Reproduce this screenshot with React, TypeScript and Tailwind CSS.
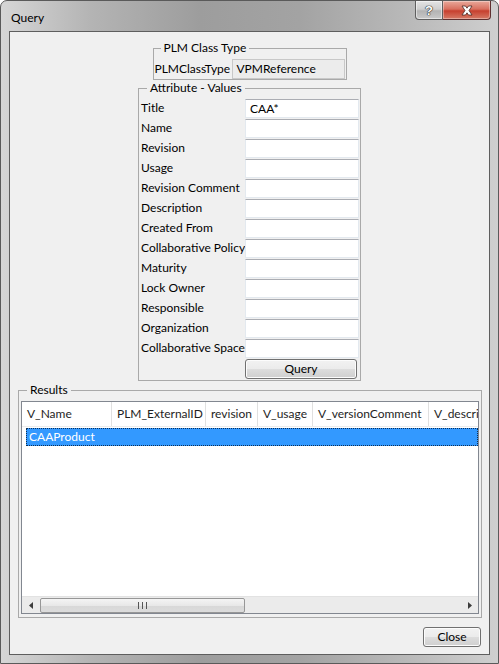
const labels = [
  "Title",
  "Name",
  "Revision",
  "Usage",
  "Revision Comment",
  "Description",
  "Created From",
  "Collaborative Policy",
  "Maturity",
  "Lock Owner",
  "Responsible",
  "Organization",
  "Collaborative Space",
];

const values: Record<string, string> = { Title: "CAA*" };

const columns = [
  { name: "V_Name", cls: "w-[90px]" },
  { name: "PLM_ExternalID", cls: "w-[94px]" },
  { name: "revision", cls: "w-[52px]" },
  { name: "V_usage", cls: "w-[55px]" },
  { name: "V_versionComment", cls: "w-[116px]" },
  { name: "V_description", cls: "w-[120px]" },
];

function WinButton({ children, className }: { children: React.ReactNode; className?: string }) {
  return (
    <div
      className={`flex items-center justify-center h-[20px] rounded-[3px] border border-[#707070] bg-[linear-gradient(to_bottom,#f2f2f2_0%,#ebebeb_50%,#dddddd_51%,#cfcfcf_100%)] shadow-[inset_0_0_0_1px_#fcfcfc] text-black ${className ?? ""}`}
    >
      {children}
    </div>
  );
}

export default function App() {
  return (
    <div className="w-[499px] h-[664px] flex flex-col rounded-t-[7px] border border-[#5a5a5a] bg-[linear-gradient(to_right,#d6d6d6_0%,#b4b4b4_18%,#9d9d9d_40%,#a3a3a3_60%,#b9b9b9_82%,#cfcfcf_100%)] font-['Lato','Liberation_Sans',Arial,sans-serif] overflow-hidden">
      {/* title bar */}
      <div className="h-[30px] shrink-0 flex items-start">
        <span className="pl-[10px] pt-[10px] text-[12px] leading-[14px] text-black">Query</span>
        <div className="ml-auto mr-[7px] flex h-[19px]">
          <div className="w-[28px] h-[19px] flex items-center justify-center border border-t-0 border-[#5f5f5f] rounded-bl-[4px] bg-[linear-gradient(to_bottom,#e4e4e4_0%,#cfcfcf_45%,#b3b3b3_55%,#c9c9c9_100%)] shadow-[inset_0_0_0_1px_rgba(255,255,255,0.5)]">
            <span className="font-['Liberation_Sans',Arial,sans-serif] text-[13px] font-bold leading-none text-white [text-shadow:0_0_1px_#222,0_0_1px_#222,0_0_1px_#222]">?</span>
          </div>
          <div className="w-[48px] h-[19px] flex items-center justify-center border border-l-0 border-t-0 border-[#5f3030] rounded-br-[4px] bg-[linear-gradient(to_bottom,#e9a99b_0%,#d8705f_45%,#c7402f_55%,#d67a66_100%)] shadow-[inset_0_0_0_1px_rgba(255,255,255,0.35)]">
            <svg width="14" height="11" viewBox="0 0 14 11">
              <path
                d="M2 1 L5.5 1 L7 3.2 L8.5 1 L12 1 L9 5.5 L12 10 L8.5 10 L7 7.8 L5.5 10 L2 10 L5 5.5 Z"
                fill="#ffffff"
                stroke="#4a2a25"
                strokeWidth="0.8"
                strokeLinejoin="round"
              />
            </svg>
          </div>
        </div>
      </div>

      {/* client area */}
      <div className="mx-[8px] h-[624px] shrink-0 flex flex-col border border-[#5e5e5e] bg-[#f0f0f0] text-[12px] leading-[14px] text-black">
        {/* PLM Class Type */}
        <fieldset className="mt-[9px] mx-auto w-[194px] min-w-0 border border-[#a9a9a9] px-[1px] pt-[4px] pb-[0px]">
          <legend className="ml-[6px] px-[3px] leading-[14px]">PLM Class Type</legend>
          <div className="flex items-center h-[20px]">
            <span className="w-[77px] shrink-0 whitespace-nowrap">PLMClassType</span>
            <div className="w-[113px] h-[20px] flex items-center pl-[4px] border border-[#c8c8c8] bg-[#ececec]">
              VPMReference
            </div>
          </div>
        </fieldset>

        {/* Attribute - Values */}
        <fieldset className="mt-[1px] mx-auto w-[223px] min-w-0 border border-[#a9a9a9] pl-[2px] pr-[1px] pt-[4px] pb-[1px]">
          <legend className="ml-[6px] px-[3px] leading-[14px]">Attribute - Values</legend>
          <div className="flex flex-col">
            {labels.map((l) => (
              <div key={l} className="flex h-[20px]">
                <span className="w-[104px] shrink-0 pt-[2px] whitespace-nowrap">{l}</span>
                <div className="w-[114px] h-[19px] flex items-center pl-[4px] bg-white border border-[#e3e9ef] border-t-[#abadb3]">
                  {values[l] ?? ""}
                </div>
              </div>
            ))}
            <div className="flex h-[20px]">
              <span className="w-[104px] shrink-0" />
              <WinButton className="w-[112px] h-[19px]">Query</WinButton>
            </div>
          </div>
        </fieldset>

        {/* Results */}
        <fieldset className="mt-[2px] ml-[8px] w-[464px] min-w-0 h-[235px] border border-[#a9a9a9] pl-[2px] pr-[2px] pt-[4px] pb-[3px]">
          <legend className="ml-[6px] px-[3px] leading-[14px]">Results</legend>
          <div className="w-[458px] h-[213px] flex flex-col border border-[#828790] bg-white overflow-hidden">
            <div className="h-[25px] shrink-0 flex overflow-hidden border-b border-[#ececec] whitespace-nowrap">
              {columns.map((c) => (
                <div
                  key={c.name}
                  className={`${c.cls} shrink-0 flex items-center pl-[5px] border-r border-[#e0e0e0] text-[#1e1e1e] overflow-hidden`}
                >
                  {c.name}
                </div>
              ))}
            </div>
            <div className="mt-[1px] ml-[4px] h-[18px] flex items-center pl-[2px] bg-[#3399ff] border border-dotted border-[#0d2f55] text-white">
              CAAProduct
            </div>
            <div className="flex-1" />
            {/* horizontal scrollbar */}
            <div className="h-[17px] shrink-0 flex items-center bg-[#ebebeb] border-t border-[#e2e2e2]">
              <div className="w-[17px] h-full flex items-center justify-center">
                <svg width="4" height="7" viewBox="0 0 4 7">
                  <path d="M4 0 L0 3.5 L4 7 Z" fill="#3c3c3c" />
                </svg>
              </div>
              <div className="ml-[1px] w-[205px] h-[15px] flex items-center justify-center rounded-[2px] border border-[#979797] bg-[linear-gradient(to_bottom,#f4f4f4_0%,#e8e8e8_50%,#d8d8d8_51%,#dcdcdc_100%)]">
                <div className="flex gap-[1px]">
                  <span className="w-[1px] h-[7px] bg-[#555]" />
                  <span className="w-[1px] h-[7px] bg-transparent" />
                  <span className="w-[1px] h-[7px] bg-[#555]" />
                  <span className="w-[1px] h-[7px] bg-transparent" />
                  <span className="w-[1px] h-[7px] bg-[#555]" />
                </div>
              </div>
              <div className="flex-1" />
              <div className="w-[17px] h-full flex items-center justify-center">
                <svg width="4" height="7" viewBox="0 0 4 7">
                  <path d="M0 0 L4 3.5 L0 7 Z" fill="#3c3c3c" />
                </svg>
              </div>
            </div>
          </div>
        </fieldset>

        <div className="mt-[9px] mr-[8px] self-end">
          <WinButton className="w-[58px]">Close</WinButton>
        </div>
      </div>
    </div>
  );
}
